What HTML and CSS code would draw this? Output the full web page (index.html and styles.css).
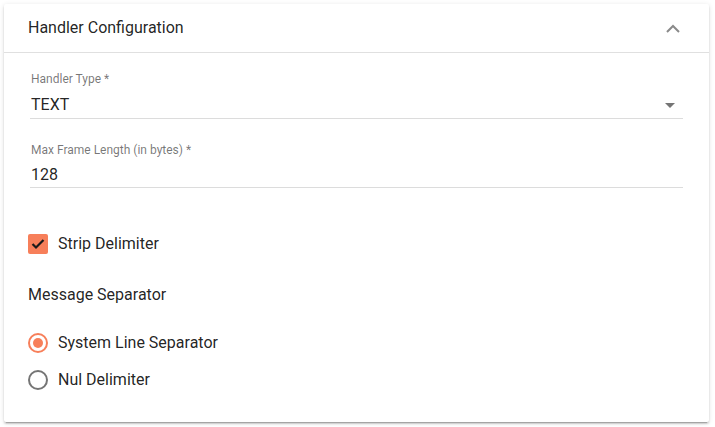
FILE: index.html
```html
<!DOCTYPE html>
<html>
<head>
<meta charset="utf-8">
<link rel="stylesheet" href="styles.css">
</head>
<body>
<div class="card">
  <div class="header">
    <span class="title">Handler Configuration</span>
    <svg class="chevron" width="14" height="9" viewBox="0 0 14 9"><path d="M1 8 L7 2 L13 8" fill="none" stroke="#8a8a8a" stroke-width="2"/></svg>
  </div>
  <div class="content">
    <div class="field field-first">
      <div class="label">Handler Type *</div>
      <div class="value select">
        <span>TEXT</span>
        <svg class="arrow" width="10" height="5" viewBox="0 0 10 5"><path d="M0 0 L10 0 L5 5 Z" fill="#757575"/></svg>
      </div>
    </div>
    <div class="field field-second">
      <div class="label">Max Frame Length (in bytes) *</div>
      <div class="value value-second">128</div>
    </div>
    <div class="check-row">
      <span class="checkbox">
        <svg width="14" height="12" viewBox="0 0 14 12"><path d="M1.5 6 L5 9.5 L12.5 2" fill="none" stroke="#1a1a1a" stroke-width="2.2"/></svg>
      </span>
      <span class="opt-text">Strip Delimiter</span>
    </div>
    <div class="section-title">Message Separator</div>
    <div class="radio-row radio-first">
      <span class="radio checked"><span class="dot"></span></span>
      <span class="opt-text">System Line Separator</span>
    </div>
    <div class="radio-row radio-second">
      <span class="radio"></span>
      <span class="opt-text">Nul Delimiter</span>
    </div>
  </div>
</div>
</body>
</html>
```
FILE: styles.css
```css
html, body {
  margin: 0;
  background: #ffffff;
}
body {
  padding: 4px 6px 5px 4px;
  font-family: Roboto, "Liberation Sans", sans-serif;
  color: rgba(0, 0, 0, 0.87);
}
.card {
  width: 705px;
  height: 418px;
  background: #fff;
  box-shadow: 0 3px 1px -2px rgba(0,0,0,.2), 0 2px 2px 0 rgba(0,0,0,.14), 0 1px 5px 0 rgba(0,0,0,.12);
  border-radius: 2px;
}
.header {
  height: 48px;
  display: flex;
  align-items: center;
  justify-content: space-between;
  padding: 0 29px 0 24px;
  border-bottom: 1px solid #e0e0e0;
}
.title {
  font-size: 16px;
  line-height: 20px;
}
.chevron {
  display: block;
}
.content {
  padding: 0 26px;
}
.field {
  border-bottom: 1px solid #dcdcdc;
}
.field-first {
  margin-top: 18px;
  padding-bottom: 3px;
}
.field-second {
  margin-top: 23px;
  padding-bottom: 2px;
}
.label {
  font-size: 12px;
  line-height: 16px;
  color: rgba(0, 0, 0, 0.54);
  padding-left: 1px;
}
.value {
  font-size: 16px;
  line-height: 20px;
  margin-top: 8px;
  padding-left: 1px;
}
.value-second {
  margin-top: 7px;
}
.select {
  display: flex;
  align-items: center;
  justify-content: space-between;
  padding-right: 8px;
}
.arrow {
  display: block;
}
.check-row, .radio-row {
  display: flex;
  align-items: center;
  height: 20px;
  margin-left: -2px;
}
.check-row {
  margin-top: 46px;
}
.checkbox {
  width: 20px;
  height: 20px;
  border-radius: 2px;
  background: #f77f5a;
  display: flex;
  align-items: center;
  justify-content: center;
  margin-right: 10px;
}
.checkbox svg {
  display: block;
}
.opt-text {
  font-size: 16px;
  line-height: 20px;
}
.section-title {
  font-size: 16px;
  line-height: 20px;
  margin-top: 31px;
  margin-left: -2px;
}
.radio-first {
  margin-top: 28px;
}
.radio-second {
  margin-top: 17px;
}
.radio {
  width: 20px;
  height: 20px;
  box-sizing: border-box;
  border: 2px solid #757575;
  border-radius: 50%;
  margin-right: 10px;
  display: flex;
  align-items: center;
  justify-content: center;
}
.radio.checked {
  border-color: #f77f5a;
}
.dot {
  width: 10px;
  height: 10px;
  border-radius: 50%;
  background: #f77f5a;
}
```
